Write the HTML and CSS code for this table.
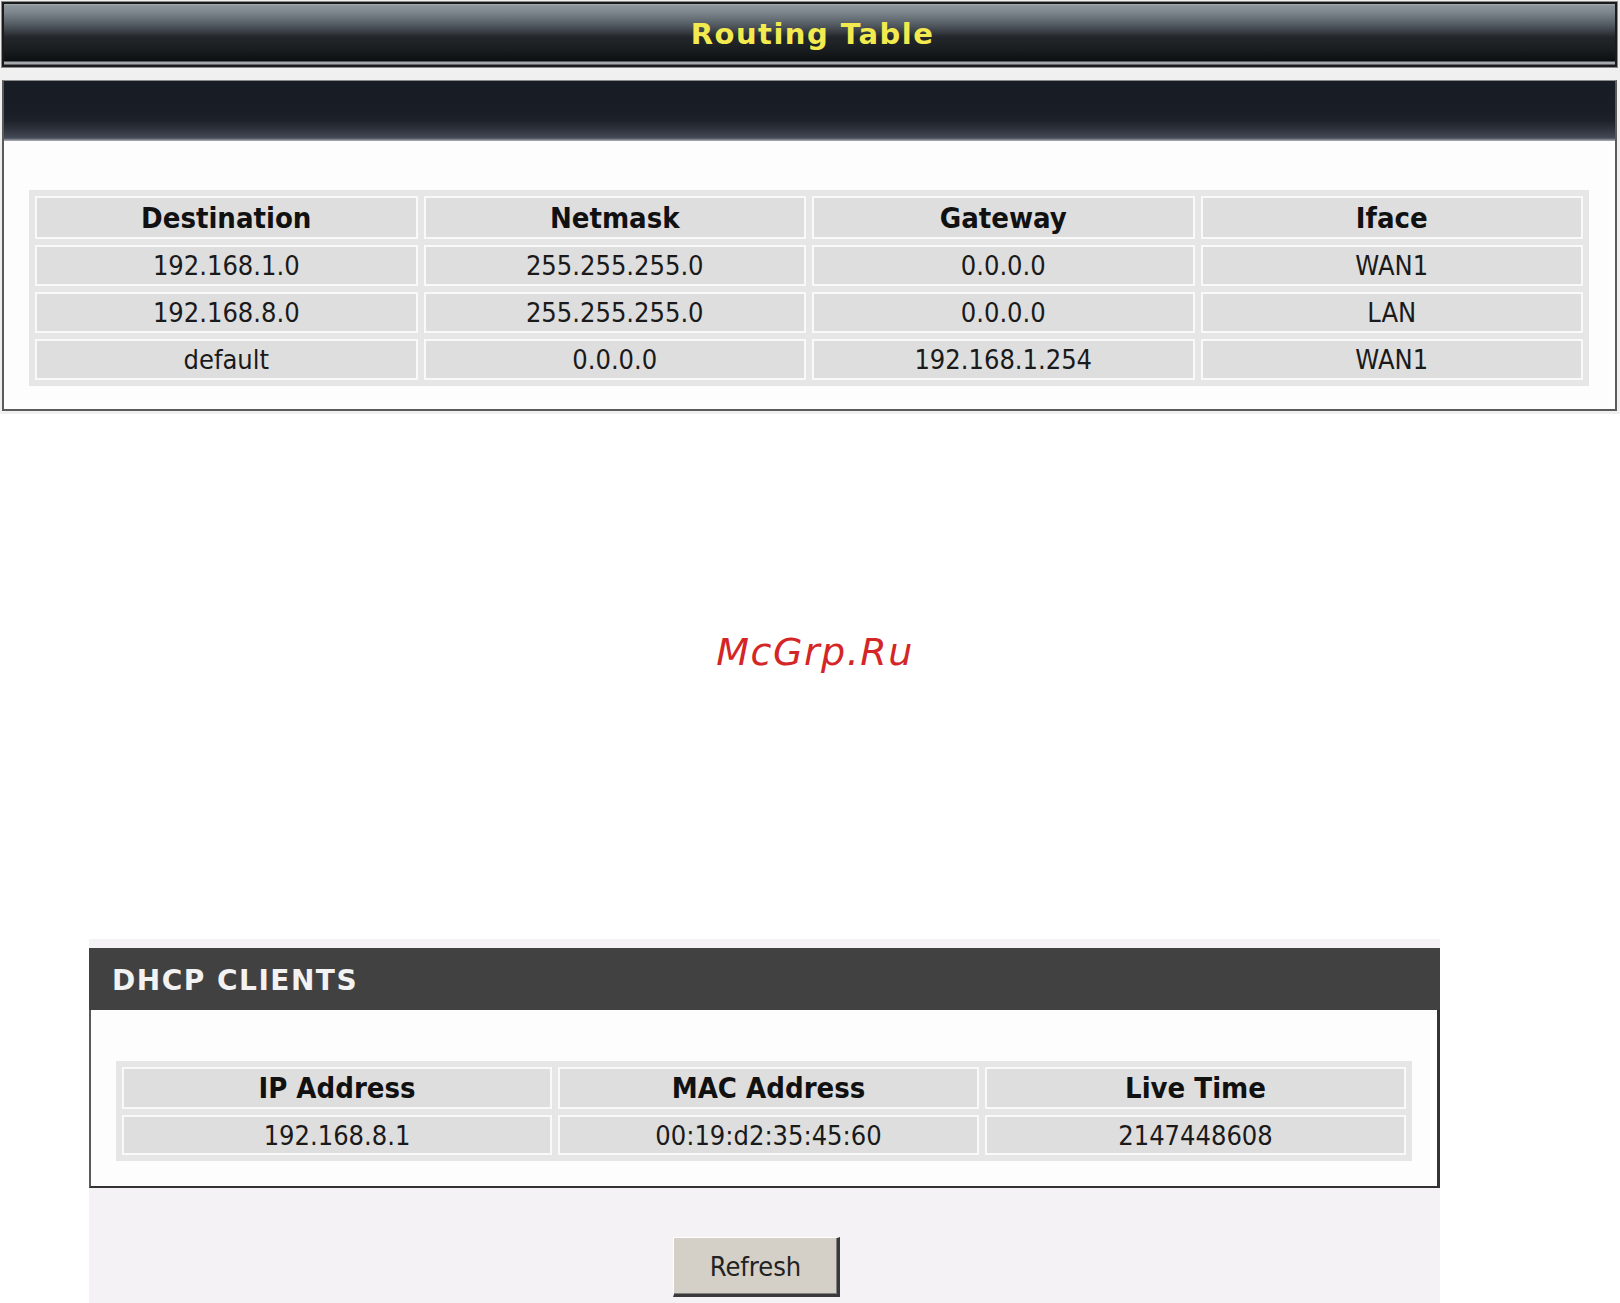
FILE: index.html
```html
<!DOCTYPE html>
<html>
<head>
<meta charset="utf-8">
<title>Routing Table</title>
<link rel="stylesheet" href="styles.css">
</head>
<body>
<div class="shot1">
  <div class="titlebar">Routing Table</div>
  <div class="panel">
    <div class="panel-head"></div>
    <div class="panel-body">
      <table class="grid rt">
        <tr><th>Destination</th><th>Netmask</th><th>Gateway</th><th>Iface</th></tr>
        <tr><td>192.168.1.0</td><td>255.255.255.0</td><td>0.0.0.0</td><td>WAN1</td></tr>
        <tr><td>192.168.8.0</td><td>255.255.255.0</td><td>0.0.0.0</td><td>LAN</td></tr>
        <tr><td>default</td><td>0.0.0.0</td><td>192.168.1.254</td><td>WAN1</td></tr>
      </table>
    </div>
  </div>
</div>
<div class="watermark">McGrp.Ru</div>
<div class="shot2">
  <div class="dhcp-head">DHCP CLIENTS</div>
  <div class="dhcp-body">
    <table class="grid dt">
      <colgroup><col class="c1"><col class="c2"><col class="c3"></colgroup>
      <tr><th>IP Address</th><th>MAC Address</th><th>Live Time</th></tr>
      <tr><td>192.168.8.1</td><td>00:19:d2:35:45:60</td><td>2147448608</td></tr>
    </table>
  </div>
  <div class="actions"><button class="btn" type="button">Refresh</button></div>
</div>
</body>
</html>
```
FILE: styles.css
```css
html, body {
  margin: 0;
  padding: 0;
  background: #ffffff;
}
body {
  width: 1620px;
  height: 1303px;
  overflow: hidden;
  font-family: "DejaVu Sans Condensed", "DejaVu Sans", sans-serif;
  font-stretch: condensed;
}

.shot1 {
  background: #f0f0f0;
  padding: 2px 3px 3px 2px;
}

.titlebar {
  height: 61px;
  border: 2px solid #1b1b1b;
  box-shadow: 0 0 0 1px #8c8c8c;
  background: linear-gradient(to bottom,
    #a4acb1 0px, #8a949a 2px, #7e878e 8px, #5d656c 18px, #3f454b 26px,
    #23272b 33px, #1b1e21 45px, #0f1215 55px, #0b0e11 57px,
    #a6aaae 58px, #a6aaae 60px, #1e2124 61px);
  text-align: center;
  padding-left: 6px;
  color: #f3ea4f;
  font-family: "DejaVu Sans", sans-serif;
  font-stretch: normal;
  font-weight: bold;
  font-size: 29px;
  line-height: 61px;
  letter-spacing: 1.5px;
  margin-bottom: 13px;
}

.panel {
  border: 2px solid #5a5a5a;
  border-top: 1px solid #8a8a8a;
  background: #fdfdfd;
}
.panel-head {
  height: 60px;
  background: linear-gradient(to bottom,
    #171c25 0px, #181d26 30px, #1d222b 40px, #2d323c 48px,
    #444a56 57px, #8c9098 59px, #b0b3b8 60px);
}
.panel-body {
  padding: 49px 26px 23px 25px;
}

.grid {
  width: 100%;
  border-collapse: separate;
  border-spacing: 6px;
  background: #e6e6e6;
  table-layout: fixed;
}
.grid td, .grid th {
  box-sizing: border-box;
  background: #dedede;
  border: 2px solid #f9f9f9;
  padding: 0;
  text-align: center;
  vertical-align: middle;
  color: #1a1a1a;
  font-size: 27px;
  font-weight: normal;
}
.grid th {
  font-weight: bold;
  font-size: 29px;
  color: #111111;
}
.rt th { height: 43px; }
.rt td { height: 41px; }
.dt th { height: 42px; }
.dt td { height: 40px; }
.dt .c1 { width: 430px; }
.dt .c2 { width: 421px; }
.dt .c3 { width: 421px; }

.watermark {
  margin-top: 216px;
  padding-left: 10px;
  text-align: center;
  font-family: "DejaVu Sans", sans-serif;
  font-stretch: normal;
  font-style: oblique;
  font-size: 38px;
  line-height: 44px;
  letter-spacing: 1.5px;
  color: #d42626;
}

.shot2 {
  margin: 265px 0 0 89px;
  width: 1351px;
  background: #f5f2f6;
  padding-top: 9px;
  height: 360px;
}
.dhcp-head {
  height: 55px;
  padding: 7px 0 0 23px;
  line-height: 52px;
  background: #414141;
  color: #f2f2f2;
  font-family: "DejaVu Sans", sans-serif;
  font-stretch: normal;
  font-weight: bold;
  font-size: 28px;
  letter-spacing: 1.5px;
}
.dhcp-body {
  background: #fdfdfd;
  border-left: 2px solid #5a5a5a;
  border-right: 3px solid #333333;
  border-bottom: 2px solid #333333;
  padding: 51px 25px 25px 25px;
}
.actions {
  display: flex;
  justify-content: center;
  padding: 49px 16px 0 0;
}
.btn {
  box-sizing: border-box;
  width: 167px;
  height: 60px;
  padding: 0;
  background: #d4d0c8;
  border-style: solid;
  border-width: 1px 3px 3px 1px;
  border-color: #ffffff #3a3a3a #3a3a3a #ffffff;
  box-shadow: inset -1px -1px 0 #808080;
  font-family: "DejaVu Sans Condensed", "DejaVu Sans", sans-serif;
  font-stretch: condensed;
  font-size: 27px;
  color: #222222;
}
```
